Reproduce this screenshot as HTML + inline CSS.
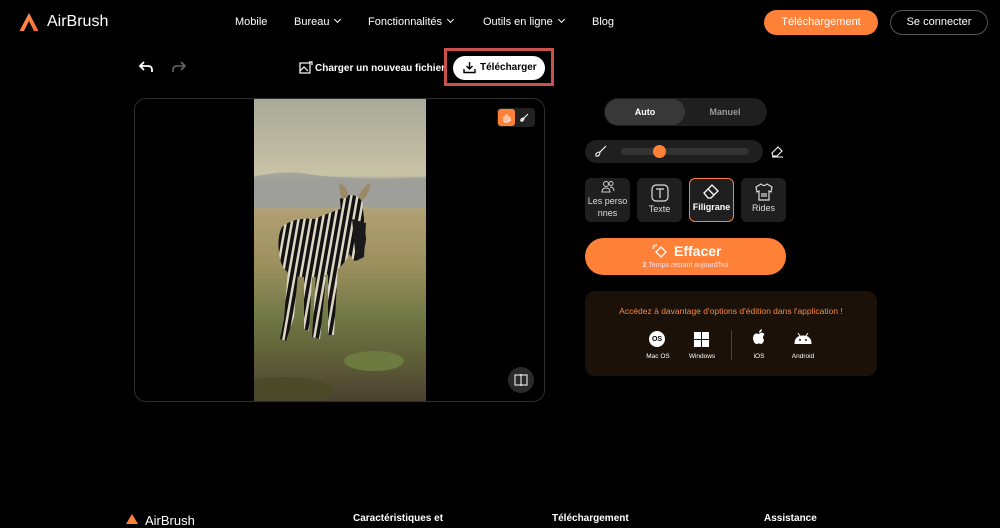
<!DOCTYPE html>
<html><head><meta charset="utf-8"><style>
*{margin:0;padding:0;box-sizing:border-box}
body{width:1000px;height:522px;background:#000;color:#fff;font-family:"Liberation Sans",sans-serif;position:relative;overflow:hidden}
.a{position:absolute}
.nav{font-size:11px;color:#fff;top:16px}
.chev{display:inline-block;width:5px;height:5px;border-right:1px solid #fff;border-bottom:1px solid #fff;transform:rotate(45deg);margin-left:6px;position:relative;top:-3px}
.tool{position:absolute;top:178px;width:45px;height:44px;background:#1f1f1f;border-radius:6px;font-size:9px;color:#ddd;text-align:center}
</style></head><body>
<svg class="a" style="left:18px;top:12px" width="22" height="20" viewBox="0 0 22 20"><defs><linearGradient id="lg" x1="0" y1="0" x2="1" y2="1"><stop offset="0" stop-color="#ff9a5a"/><stop offset="1" stop-color="#ff6a2a"/></linearGradient></defs><path d="M11 1 L2 18 Q1 19 3 19 L6 19 L11 9 L16 19 L19 19 Q21 19 20 18 Z" fill="url(#lg)"/></svg>
<div class="a" style="left:47px;top:13px;font-size:16px;color:#fff">AirBrush</div>
<div class="a nav" style="left:235px">Mobile</div>
<div class="a nav" style="left:294px">Bureau<span class="chev"></span></div>
<div class="a nav" style="left:368px">Fonctionnalités<span class="chev"></span></div>
<div class="a nav" style="left:483px">Outils en ligne<span class="chev"></span></div>
<div class="a nav" style="left:592px">Blog</div>
<div class="a" style="left:764px;top:10px;width:114px;height:25px;border-radius:13px;background:#ff8138;font-size:11px;text-align:center;line-height:25px">Téléchargement</div>
<div class="a" style="left:890px;top:10px;width:98px;height:25px;border-radius:13px;border:1px solid #555;font-size:11px;text-align:center;line-height:23px">Se connecter</div>
<svg class="a" style="left:138px;top:60px" width="16" height="14" viewBox="0 0 16 14" fill="none" stroke="#fff" stroke-width="1.8"><path d="M6 2 L2 6 L6 10 M2 6 H10 Q14 6 14 10 L14 12"/></svg>
<svg class="a" style="left:171px;top:60px" width="16" height="14" viewBox="0 0 16 14" fill="none" stroke="#666" stroke-width="1.6"><path d="M10 2 L14 6 L10 10 M14 6 H6 Q2 6 2 10 L2 12"/></svg>
<svg class="a" style="left:299px;top:61px" width="14" height="13" viewBox="0 0 14 13" fill="none" stroke="#fff" stroke-width="1.2"><rect x="1" y="2" width="10" height="10"/><path d="M1 10 L5 6 L9 10"/><path d="M10 1 h3 v3"/></svg>
<div class="a" style="left:315px;top:63px;font-size:10px;font-weight:bold">Charger un nouveau fichier</div>
<div class="a" style="left:444px;top:48px;width:110px;height:38px;border:3px solid #c9524d"></div>
<div class="a" style="left:453px;top:56px;width:92px;height:24px;background:#fff;border-radius:12px;color:#000;font-size:10px;font-weight:bold;line-height:24px;padding-left:27px">Télécharger</div>
<svg class="a" style="left:463px;top:61px" width="13" height="13" viewBox="0 0 13 13" fill="none" stroke="#000" stroke-width="1.4"><path d="M6.5 1 V8 M3.5 5 L6.5 8 L9.5 5 M1 8 V11.5 H12 V8"/></svg>
<div class="a" style="left:134px;top:98px;width:411px;height:304px;border:1px solid #2e2e2e;border-radius:12px;overflow:hidden;background:#000">
<svg class="a" style="left:119px;top:0" width="172" height="303" viewBox="0 0 172 303">
<defs>
<linearGradient id="bg" x1="0" y1="0" x2="0" y2="1">
<stop offset="0" stop-color="#a8a999"/><stop offset=".25" stop-color="#c9c3a6"/>
<stop offset=".27" stop-color="#a4a39c"/><stop offset=".34" stop-color="#a9a9a0"/>
<stop offset=".37" stop-color="#b09f72"/><stop offset=".55" stop-color="#9c8f5e"/>
<stop offset=".72" stop-color="#707845"/><stop offset=".85" stop-color="#5f6038"/><stop offset="1" stop-color="#4b4030"/></linearGradient>
<pattern id="st" width="6" height="10" patternUnits="userSpaceOnUse" patternTransform="rotate(10)"><rect width="6" height="10" fill="#ddd6c4"/><rect width="3.5" height="10" fill="#121212"/></pattern>
</defs>
<rect width="172" height="303" fill="url(#bg)"/>
<path d="M0 78 Q30 70 60 76 Q110 82 172 78 L172 108 L0 108Z" fill="#9c9d99" opacity=".8"/>
<ellipse cx="30" cy="292" rx="50" ry="14" fill="#4a4a28"/>
<ellipse cx="120" cy="262" rx="30" ry="10" fill="#6d7a40"/>
<g fill="url(#st)">
<path d="M28 128 Q40 118 60 120 Q80 112 92 108 L100 140 Q96 160 84 170 Q70 180 50 178 Q30 178 26 160 Q22 140 28 128Z"/>
<path d="M34 170 L30 220 L26 240 L32 242 L40 218 L44 175Z"/>
<path d="M50 175 L50 230 L55 232 L58 178Z"/>
<path d="M62 175 L58 238 L66 240 L72 178Z"/>
<path d="M74 170 L74 236 L80 236 L84 168Z"/>
</g>
<path d="M86 100 Q96 92 108 100 L112 140 Q110 160 100 162 Q90 150 88 130Z" fill="url(#st)"/>
<path d="M98 120 L112 124 L110 158 L102 162 Z" fill="#1a1a1a"/>
<path d="M88 100 Q84 88 86 84 Q94 88 94 98Z M104 98 Q110 86 117 84 Q116 94 108 102Z" fill="#9a8a68"/>
</svg>
<div class="a" style="left:362px;top:9px;width:38px;height:19px;background:#222;border-radius:4px"></div>
<div class="a" style="left:363px;top:10px;width:17px;height:17px;background:#ff8138;border-radius:3px"></div>
<svg class="a" style="left:366px;top:13px" width="11" height="11" viewBox="0 0 11 11" fill="none" stroke="#fff" stroke-width="1"><path d="M3 10 V4 M5 9 V2 M7 9 V3 M9 9 V5 Q9 10 6 10 H3"/></svg>
<svg class="a" style="left:384px;top:13px" width="11" height="11" viewBox="0 0 11 11" fill="none" stroke="#fff" stroke-width="1"><path d="M2 9 L6 5 L9 2 M2 9 Q1 7 4 6 L5 7 Q4 10 2 9Z"/></svg>
<div class="a" style="left:373px;top:268px;width:26px;height:26px;border-radius:13px;background:#2a2a2a"></div>
<svg class="a" style="left:379px;top:275px" width="14" height="12" viewBox="0 0 14 12" fill="none" stroke="#fff" stroke-width="1"><rect x="1" y="1" width="12" height="10"/><path d="M7 0 V12"/></svg>
</div>
<div class="a" style="left:604px;top:98px;width:163px;height:28px;background:#1f1f1f;border-radius:14px"></div>
<div class="a" style="left:605px;top:99px;width:80px;height:26px;background:#383838;border-radius:13px;font-size:9px;font-weight:bold;text-align:center;line-height:26px">Auto</div>
<div class="a" style="left:685px;top:99px;width:80px;height:26px;font-size:9px;font-weight:bold;color:#999;text-align:center;line-height:26px">Manuel</div>
<div class="a" style="left:585px;top:140px;width:178px;height:23px;background:#1f1f1f;border-radius:12px"></div>
<svg class="a" style="left:594px;top:145px" width="13" height="13" viewBox="0 0 13 13" fill="none" stroke="#fff" stroke-width="1.1"><path d="M12 1 L6 7 M2 11 Q1 8 5 7 L6 8 Q5 12 2 11Z"/></svg>
<div class="a" style="left:621px;top:148px;width:128px;height:7px;background:#333;border-radius:4px"></div>
<div class="a" style="left:653px;top:145px;width:13px;height:13px;background:#ff8138;border-radius:50%"></div>
<svg class="a" style="left:771px;top:146px" width="13" height="12" viewBox="0 0 13 12" fill="none" stroke="#fff" stroke-width="1.1"><path d="M1 7 L7 1 L11 5 L6 10 H2Z M1 11 H12"/></svg>
<div class="tool" style="left:585px"><svg style="margin-top:2px" width="14" height="14" viewBox="0 0 14 14" fill="none" stroke="#ccc" stroke-width="1"><circle cx="5" cy="4" r="2.5"/><circle cx="10" cy="3.5" r="2"/><path d="M1 12 Q1 8 5 8 Q9 8 9 12Z M9 7 Q13 7 13 11"/></svg><div style="line-height:12px;margin-top:-1px">Les perso<br>nnes</div></div>
<div class="tool" style="left:637px"><svg style="margin-top:6px" width="18" height="18" viewBox="0 0 18 18" fill="none" stroke="#ddd" stroke-width="1.2"><rect x="1" y="1" width="16" height="16" rx="4"/><path d="M5 5 H13 M9 5 V14"/></svg><div>Texte</div></div>
<div class="tool" style="left:689px;border:1.5px solid #ff8138;color:#fff;font-weight:bold"><svg style="margin-top:5px" width="20" height="16" viewBox="0 0 20 16" fill="none" stroke="#fff" stroke-width="1.3"><path d="M2 9 L10 1 L16 7 L9 14 H6Z M6 5 L12 11"/></svg><div>Filigrane</div></div>
<div class="tool" style="left:741px"><svg style="margin-top:5px" width="18" height="18" viewBox="0 0 18 18" fill="none" stroke="#ddd" stroke-width="1.2"><path d="M6 1 L1 4 L2 9 L4 8 V17 H14 V8 L16 9 L17 4 L12 1 Q9 4 6 1Z M7 10 V14 M9 10 V14 M11 10 V14"/></svg><div>Rides</div></div>
<div class="a" style="left:585px;top:238px;width:201px;height:37px;background:#ff8138;border-radius:19px"></div>
<svg class="a" style="left:651px;top:243px" width="17" height="15" viewBox="0 0 17 15" fill="none" stroke="#fff" stroke-width="1.3"><path d="M5 9 L10 4 L15 9 L10 14 Z M2 2 L4 4 M5 1 V3 M1 5 H3"/></svg>
<div class="a" style="left:674px;top:243px;font-size:14px;font-weight:bold">Effacer</div>
<div class="a" style="left:585px;top:262px;width:201px;text-align:center;font-size:7px;color:#fde"><b>2</b> Temps restant aujourd'hui</div>
<div class="a" style="left:585px;top:291px;width:292px;height:85px;background:#1b1109;border-radius:10px"></div>
<div class="a" style="left:585px;top:306px;width:292px;text-align:center;font-size:8.5px;color:#f08a4a">Accédez à davantage d'options d'édition dans l'application !</div>
<div class="a" style="left:649px;top:331px;width:16px;height:16px;border-radius:50%;background:#fff;color:#000;font-size:7px;text-align:center;line-height:17px;font-weight:bold">OS</div>
<svg class="a" style="left:694px;top:332px" width="15" height="15" viewBox="0 0 15 15" fill="#fff"><rect x="0" y="0" width="7" height="7"/><rect x="8" y="0" width="7" height="7"/><rect x="0" y="8" width="7" height="7"/><rect x="8" y="8" width="7" height="7"/></svg>
<div class="a" style="left:731px;top:330px;width:1px;height:30px;background:#444"></div>
<svg class="a" style="left:752px;top:329px" width="14" height="17" viewBox="0 0 14 17" fill="#fff"><path d="M7 5 Q9 3 11 4 Q13 5 12 6 Q10 8 12 11 Q11 15 9 15 Q7 14 5 15 Q2 15 1 10 Q1 5 4 4.5 Q5.5 4.5 7 5Z M7 4 Q7 1 10 0 Q10 3 7 4Z"/></svg>
<svg class="a" style="left:794px;top:333px" width="18" height="11" viewBox="0 0 18 11" fill="#fff"><path d="M1 11 Q1 3 9 3 Q17 3 17 11Z M4 0 L6 3 M14 0 L12 3" stroke="#fff" stroke-width="1"/><circle cx="6" cy="7" r="1" fill="#1b1109"/><circle cx="12" cy="7" r="1" fill="#1b1109"/></svg>
<div class="a" style="left:640px;top:353px;width:36px;text-align:center;font-size:6.5px">Mac OS</div>
<div class="a" style="left:683px;top:353px;width:38px;text-align:center;font-size:6.5px">Windows</div>
<div class="a" style="left:745px;top:353px;width:28px;text-align:center;font-size:6.5px">iOS</div>
<div class="a" style="left:785px;top:353px;width:36px;text-align:center;font-size:6.5px">Android</div>
<svg class="a" style="left:126px;top:514px" width="12" height="10" viewBox="0 0 12 10"><path d="M6 0 L0 10 H12Z" fill="#ff8138"/></svg>
<div class="a" style="left:145px;top:513px;font-size:13px">AirBrush</div>
<div class="a" style="left:353px;top:513px;font-size:10px;font-weight:bold">Caractéristiques et</div>
<div class="a" style="left:552px;top:513px;font-size:10px;font-weight:bold">Téléchargement</div>
<div class="a" style="left:764px;top:513px;font-size:10px;font-weight:bold">Assistance</div>
</body></html>
